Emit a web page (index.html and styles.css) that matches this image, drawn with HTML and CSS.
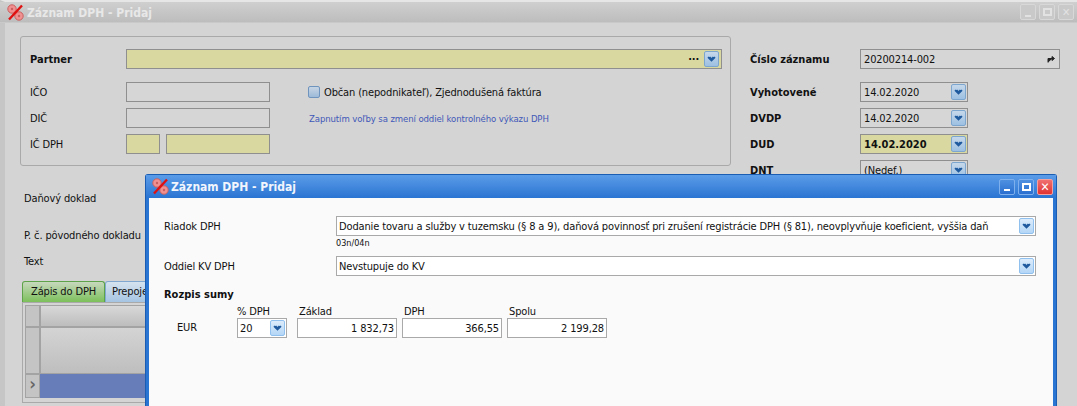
FILE: index.html
```html
<!DOCTYPE html>
<html lang="sk">
<head>
  <meta charset="UTF-8">
  <title>Záznam DPH - Pridaj</title>
  <link rel="stylesheet" href="styles.css">
</head>
<body>
  <svg class="defs" width="0" height="0">
    <symbol id="chev" viewBox="0 0 9 7">
      <path d="M1 1.2 4.5 4.6 8 1.2M2.5 1 4.5 3 6.5 1" fill="none" stroke="#1f5a9e" stroke-width="1.7"/>
    </symbol>
    <symbol id="percent" viewBox="0 0 17 17">
      <circle cx="5" cy="5" r="4.2" fill="#f09090" stroke="#c96060" stroke-width="1"/>
      <circle cx="5" cy="5" r="1.2" fill="#c96060"/>
      <circle cx="12" cy="12" r="4.2" fill="#f09090" stroke="#c96060" stroke-width="1"/>
      <circle cx="12" cy="12" r="1.2" fill="#c96060"/>
      <path d="M15 1.5 2 15.5" stroke="#e01010" stroke-width="2.4"/>
    </symbol>
    <symbol id="jump" viewBox="0 0 8 8">
      <path d="M1 7.5V3.5H5.5M5 1.5 7.5 3.5 5 5.5Z" fill="#222" stroke="#222" stroke-width="1"/>
    </symbol>
  </svg>

  <div class="window">
    <div class="titlebar">
      <svg class="app-icon"><use href="#percent"/></svg>
      <span class="title">Záznam DPH - Pridaj</span>
      <div class="win-btns">
        <span class="win-btn"><i class="ic-min"></i></span>
        <span class="win-btn"><i class="ic-max"></i></span>
        <span class="win-btn ic-close">✕</span>
      </div>
    </div>

    <div class="main">
      <div class="left">
        <div class="group">
          <div class="row row-partner">
            <label class="lbl b">Partner</label>
            <div class="field yellow partner">
              <span class="dots">···</span>
              <span class="combo-btn"><svg><use href="#chev"/></svg></span>
            </div>
          </div>
          <div class="row row-ico">
            <label class="lbl">IČO</label>
            <div class="field w144"></div>
            <span class="check"></span>
            <span>Občan (nepodnikateľ), Zjednodušená faktúra</span>
          </div>
          <div class="row">
            <label class="lbl">DIČ</label>
            <div class="field w144"></div>
            <span class="hint">Zapnutím voľby sa zmení oddiel kontrolného výkazu DPH</span>
          </div>
          <div class="row">
            <label class="lbl">IČ DPH</label>
            <div class="field yellow w34"></div>
            <div class="field yellow w104"></div>
          </div>
        </div>

        <div class="doc-label first">Daňový doklad</div>
        <div class="doc-label second">P. č. pôvodného dokladu</div>
        <div class="doc-label third">Text</div>

        <div class="tabs">
          <span class="tab active">Zápis do DPH</span>
          <span class="tab">Prepojenie</span>
        </div>
        <div class="grid-box">
          <div class="grid">
            <div class="cell corner"></div><div class="cell head"></div>
            <div class="cell side"></div><div class="cell head tall"></div>
            <div class="cell side arrow">›</div><div class="cell selected"></div>
          </div>
        </div>
      </div>

      <div class="right">
        <div class="r-row">
          <label class="r-lbl">Číslo záznamu</label>
          <div class="field num-field">20200214-002<svg class="jump"><use href="#jump"/></svg></div>
        </div>
        <div class="r-row gap">
          <label class="r-lbl">Vyhotovené</label>
          <div class="field date">14.02.2020<span class="combo-btn"><svg><use href="#chev"/></svg></span></div>
        </div>
        <div class="r-row">
          <label class="r-lbl">DVDP</label>
          <div class="field date">14.02.2020<span class="combo-btn"><svg><use href="#chev"/></svg></span></div>
        </div>
        <div class="r-row">
          <label class="r-lbl">DUD</label>
          <div class="field date yellow b">14.02.2020<span class="combo-btn"><svg><use href="#chev"/></svg></span></div>
        </div>
        <div class="r-row">
          <label class="r-lbl">DNT</label>
          <div class="field date">(Nedef.)<span class="combo-btn"><svg><use href="#chev"/></svg></span></div>
        </div>
      </div>
    </div>
  </div>

  <div class="dialog">
    <div class="dlg-title">
      <svg class="app-icon"><use href="#percent"/></svg>
      <span class="dlg-name">Záznam DPH - Pridaj</span>
      <div class="dlg-btns">
        <span class="dlg-btn"><i class="ic-min"></i></span>
        <span class="dlg-btn"><i class="ic-max"></i></span>
        <span class="dlg-btn close">✕</span>
      </div>
    </div>
    <div class="dlg-body">
      <div class="dlg-row">
        <label>Riadok DPH</label>
        <div class="field white wide">Dodanie tovaru a služby v tuzemsku (§ 8 a 9), daňová povinnosť pri zrušení registrácie DPH (§ 81), neovplyvňuje koeficient, vyššia daň<span class="combo-btn"><svg><use href="#chev"/></svg></span></div>
      </div>
      <div class="code">03n/04n</div>
      <div class="dlg-row">
        <label>Oddiel KV DPH</label>
        <div class="field white wide">Nevstupuje do KV<span class="combo-btn"><svg><use href="#chev"/></svg></span></div>
      </div>
      <div class="sum-title">Rozpis sumy</div>
      <div class="sum-grid">
        <span></span><span class="col-h">% DPH</span><span class="col-h indent">Základ</span><span class="col-h indent">DPH</span><span class="col-h indent">Spolu</span>
        <span class="cur">EUR</span>
        <div class="field white pct">20<span class="combo-btn"><svg><use href="#chev"/></svg></span></div>
        <div class="field white amount">1 832,73</div>
        <div class="field white amount">366,55</div>
        <div class="field white amount">2 199,28</div>
      </div>
    </div>
  </div>
</body>
</html>
```

FILE: styles.css
```css
:root {
  --panel: #d4d4d4;
  --yellow: #d8d8a0;
  --line: #8f8f8f;
  --line-light: #a9a9a9;
  --blue: #2a74d2;
}

* {
  box-sizing: border-box;
}

html, body {
  margin: 0;
  padding: 0;
  height: 406px;
  overflow: hidden;
  background: var(--panel);
  font-family: "DejaVu Sans Condensed", "DejaVu Sans", sans-serif;
  font-stretch: condensed;
  font-size: 11px;
  letter-spacing: -0.14px;
  color: #111;
}

.defs {
  position: absolute;
}

.b {
  font-weight: 700;
  letter-spacing: 0;
}

/* back window */
.window {
  height: 406px;
  border-top: 2px solid #e6e6e6;
  border-left: 5px solid #c6c6c6;
}

.titlebar {
  height: 21px;
  display: flex;
  align-items: center;
  margin-left: -5px;
  padding-left: 7px;
  background: linear-gradient(#cfcfcf, #bdbdbd);
  border-bottom: 1px solid #c9c9c9;
}

.app-icon {
  width: 17px;
  height: 17px;
  flex: none;
}

.title {
  margin-left: 3px;
  padding-top: 1px;
  font-size: 12px;
  font-weight: 700;
  letter-spacing: 0;
  color: #e8e8e8;
}

.win-btns {
  display: flex;
  gap: 3px;
  margin-left: auto;
  margin-right: 3px;
}

.win-btn {
  width: 16px;
  height: 16px;
  display: flex;
  align-items: center;
  justify-content: center;
  border: 1px solid #d8d8d8;
  border-radius: 2px;
  background: #c9c9c9;
  color: #e2e2e2;
  font-size: 11px;
  font-weight: 700;
}

.ic-min {
  width: 6px;
  height: 2px;
  margin-top: 7px;
  background: #e2e2e2;
}

.ic-max {
  width: 9px;
  height: 8px;
  border: 2px solid #e2e2e2;
}

.main {
  display: flex;
}

.left {
  width: 726px;
  padding-left: 15px;
}

.group {
  height: 130px;
  margin-top: 13px;
  padding-top: 12px;
  border: 1px solid #a9a9a9;
  border-radius: 3px;
}

.row {
  display: flex;
  align-items: center;
  height: 20px;
  margin-top: 6px;
  padding-left: 9px;
}

.row-partner {
  margin-top: 0;
  margin-bottom: 13px;
}

.lbl {
  width: 96px;
  flex: none;
}

.field {
  height: 20px;
  display: flex;
  align-items: center;
  flex: none;
  padding-left: 2px;
  border: 1px solid var(--line);
  background: #d6d6d6;
  position: relative;
  white-space: nowrap;
}

.yellow {
  background: var(--yellow);
}

.w144 {
  width: 144px;
}

.w34 {
  width: 34px;
  margin-right: 6px;
}

.w104 {
  width: 104px;
}

.partner {
  width: 596px;
  padding-right: 1px;
}

.dots {
  margin-left: auto;
  margin-right: 5px;
  font-weight: 700;
}

.partner .combo-btn {
  margin-left: 0;
}

.check {
  width: 12px;
  height: 12px;
  margin-left: 38px;
  margin-right: 4px;
  border: 1px solid #6f94bd;
  border-radius: 2px;
  background: linear-gradient(#c7d5e4, #9dbad8);
}

.hint {
  margin-left: 39px;
  font-size: 9.5px;
  letter-spacing: -0.1px;
  color: #3f58b8;
}

.combo-btn {
  width: 15px;
  height: 16px;
  display: flex;
  align-items: center;
  justify-content: center;
  flex: none;
  margin-left: auto;
  margin-right: 1px;
  border: 1px solid #7da6cf;
  border-radius: 2px;
  background: linear-gradient(#c6d8ea, #9dc0e2);
}

.white .combo-btn {
  border-color: #8fc0ee;
  background: linear-gradient(#dcecfb, #b4d6f6);
}

.combo-btn svg {
  width: 9px;
  height: 7px;
}

.doc-label {
  padding-left: 4px;
  white-space: nowrap;
}

.first {
  margin-top: 26px;
}

.second {
  margin-top: 24px;
}

.third {
  margin-top: 13px;
}

.tabs {
  display: flex;
  margin-top: 13px;
  padding-left: 2px;
}

.tab {
  height: 21px;
  padding: 3px 5px 0 6px;
  border: 1px solid #7fa7d0;
  border-bottom: 0;
  border-radius: 3px 3px 0 0;
  background: linear-gradient(#d6e3ef, #a5c4e2);
  white-space: nowrap;
}

.tab.active {
  width: 83px;
  padding-left: 8px;
  border-color: #5ea24a;
  background: linear-gradient(#c7d8bd, #7cc05a);
}

.grid-box {
  height: 101px;
  margin-left: 2px;
  padding: 2px;
  border: 1px solid #a9a9a9;
  background: var(--panel);
}

.grid {
  display: grid;
  grid-template-columns: 15px 1fr;
  grid-template-rows: 22px 47px 24px;
}

.cell {
  border: 1px solid #a3a3a3;
}

.corner, .side {
  background: #c4c4c4;
}

.head {
  background: linear-gradient(#d8d8d8, #bdbdbd);
}

.head.tall {
  background: linear-gradient(#d4d4d4, #bebebe);
}

.arrow {
  font-size: 18px;
  line-height: 18px;
  font-weight: 700;
  text-align: center;
  color: #666;
}

.selected {
  background: #667db9;
  border: 0;
}

.right {
  width: 330px;
  padding-left: 19px;
  padding-top: 26px;
}

.right .field {
  padding-left: 3px;
}

.r-row {
  display: flex;
  align-items: center;
  height: 20px;
  margin-bottom: 6px;
}

.r-row.gap {
  margin-top: 13px;
}

.r-lbl {
  width: 110px;
  flex: none;
  font-weight: 700;
  letter-spacing: 0;
}

.num-field {
  width: 200px;
}

.jump {
  width: 8px;
  height: 8px;
  margin-left: auto;
  margin-right: 4px;
}

.date {
  width: 108px;
}

/* front dialog */
.dialog {
  position: absolute;
  left: 145px;
  top: 174px;
  width: 912px;
  height: 240px;
  padding: 0 3px;
  border: 1px solid #1c5db4;
  border-bottom: 0;
  border-radius: 3px 3px 0 0;
  background: var(--blue);
}

.dlg-title {
  height: 23px;
  display: flex;
  align-items: center;
  margin: 0 -3px;
  padding-left: 6px;
  background: linear-gradient(#5b9ce8, #2a74d2);
}

.dlg-name {
  margin-left: 2px;
  padding-top: 1px;
  font-size: 12px;
  font-weight: 700;
  letter-spacing: 0;
  color: #f2f6fc;
}

.dlg-btns {
  display: flex;
  gap: 3px;
  margin-left: auto;
  margin-right: 3px;
}

.dlg-btn {
  width: 16px;
  height: 16px;
  display: flex;
  align-items: center;
  justify-content: center;
  border: 1px solid #7fb0ee;
  border-radius: 2px;
  background: linear-gradient(#4f90e0, #2a6fd0);
  color: #fff;
  font-size: 12px;
  font-weight: 700;
}

.dlg-btn.close {
  border-color: #f2a0a0;
  background: linear-gradient(#f07070, #e03232);
}

.dlg-btn .ic-min,
.dlg-btn .ic-max {
  border-color: #fff;
}

.dlg-btn .ic-min {
  background: #fff;
}

.dlg-body {
  height: 220px;
  padding: 18px 0 0 15px;
  background: #fafafa;
}

.dlg-row {
  display: flex;
  align-items: center;
}

.dlg-row label {
  width: 172px;
  flex: none;
}

.white {
  background: #fff;
  border-color: #a9a9a9;
}

.wide {
  width: 700px;
}

.code {
  height: 20px;
  padding: 2px 0 0 172px;
  font-size: 9px;
  letter-spacing: 0;
}

.sum-title {
  margin-top: 12px;
  height: 16px;
  font-weight: 700;
  letter-spacing: 0;
}

.sum-grid {
  display: grid;
  grid-template-columns: 68px 55px 100px 100px 100px;
  column-gap: 5px;
  grid-template-rows: 14px 20px;
}

.col-h {
  line-height: 16px;
}

.indent {
  padding-left: 2px;
}

.cur {
  padding-left: 13px;
  line-height: 20px;
}

.pct {
  width: 50px;
}

.amount {
  justify-content: flex-end;
  padding-right: 2px;
}
```
